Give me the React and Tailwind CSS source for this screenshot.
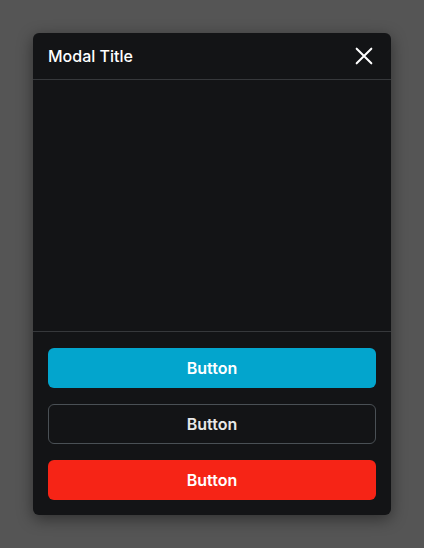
export default function App() {
  return (
    <div className="w-[424px] h-[548px] bg-[#555555] flex items-center justify-center" style={{ fontFamily: "Inter, 'Noto Sans', sans-serif" }}>
      <div className="w-[358px] h-[482px] bg-[#131416] rounded-md shadow-[0_4px_16px_rgba(0,0,0,0.45)] flex flex-col">
        <div className="h-[47px] flex items-center justify-between pl-[15px] pr-[16px] border-b border-[#36383b]">
          <span className="text-white text-[16px] font-medium">Modal Title</span>
          <svg width="22" height="22" viewBox="0 0 24 24" fill="none" stroke="white" strokeWidth="2.2" strokeLinecap="round">
            <path d="M4 4L20 20M20 4L4 20" />
          </svg>
        </div>
        <div className="flex-1 border-b border-[#36383b]" />
        <div className="flex flex-col gap-4 px-[15px] pt-4 pb-[15px]">
          <button className="h-10 rounded-md bg-[#03a5cd] text-white text-[16px] font-semibold">Button</button>
          <button className="h-10 rounded-md border border-[#4a5055] text-[#e8e8e8] text-[16px] font-semibold">Button</button>
          <button className="h-10 rounded-md bg-[#f62416] text-white text-[16px] font-semibold">Button</button>
        </div>
      </div>
    </div>
  );
}
